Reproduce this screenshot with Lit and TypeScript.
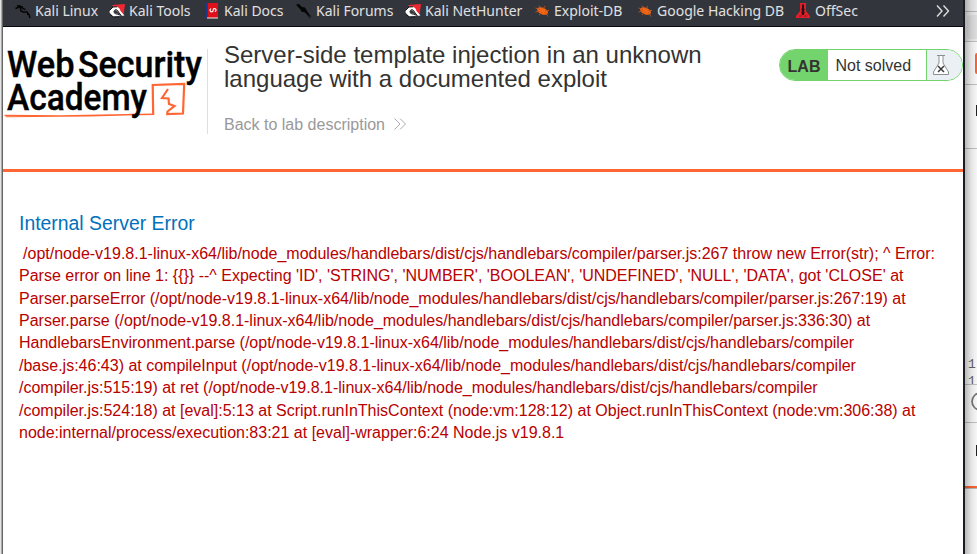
import { LitElement, html, svg, css } from "lit";
import { customElement } from "lit/decorators.js";

const icons: Record<string, unknown> = {
  dragon: svg`<path d="M0.5 5.5 L4 4 L7 4.5 L8.5 6 M2 2.8 L5 3 L8 4.5 M5.5 5 L6 8 L8 9 L12 9 L14 11.5 L15 15 M8.5 6 L10.5 6.5 M13 11 L12 11.5" fill="none" stroke="#050505" stroke-width="1.5"/>`,
  tools: svg`<path d="M3 2 L16 1 L14.5 12 L10 9 Z" fill="#ef2832"/><path d="M0.5 9.5 C1 2.5 10.5 2 11.5 8 L15.5 12.5 L12 13 L9 9 C7 6 4.5 7 5.5 9.5 C7 11 10 10 11 13 L4 13.5 Z" fill="#fff"/><path d="M0.5 7.5 L4 4 L8 3.8 M10.5 12 C8 10.5 5 11.5 5 8.8 C5 6 8.5 6 9.5 9 L12.5 13 M1.5 12 L4.5 14 H10" fill="none" stroke="#171719" stroke-width="1"/>`,
  docs: svg`<rect x="2" y="0" width="12" height="15" fill="#df1019"/><rect x="2" y="0" width="2" height="15" fill="#173c92"/><path d="M3 15h11" stroke="#eee"/><path d="M7 5.5 L5.8 7 L7 8.8 L8.8 8.5 L9.5 5.7 L11 5.5 L12.2 7 L11 8.8" fill="none" stroke="#fff" stroke-width="1.1"/>`,
  forums: svg`<path d="M0 1.5 L3 1 L6 4 L9 4.5 L11 8 L13 11 L16 14 L12 12 L8 9 L6 9 L4 6 L2 4 Z" fill="#050505"/><path d="M11 11 L14 15" stroke="#050505"/>`,
  bug: svg`<ellipse cx="8.5" cy="8" rx="5.8" ry="3.3" transform="rotate(25 8.5 8)" fill="#f36513"/><path d="M1.5 5 L6 6.5 M5 2.5 L7 5 M11 3 L9 6 M1.5 9 L6 8 M5 12 L8 9 M14 13.5 L11 9 M15 7.5 L11 7.5" stroke="#b9571f" stroke-width=".9"/>`,
  offsec: svg`<path d="M5 0h6v8l4 5v2H1v-2l4-5Z" fill="#e31e28"/><path d="M8 1.5 V12 M6.5 6.5h3 M6.5 9.5h3" stroke="#281416" stroke-width="2"/><path d="M4 13h3 M9 13h3" stroke="#801a20"/>`,
};

const bookmarks: [string, string][] = [
  ["dragon", "Kali Linux"],
  ["tools", "Kali Tools"],
  ["docs", "Kali Docs"],
  ["forums", "Kali Forums"],
  ["tools", "Kali NetHunter"],
  ["bug", "Exploit-DB"],
  ["bug", "Google Hacking DB"],
  ["offsec", "OffSec"],
];

const trace = [
  "\u00a0/opt/node-v19.8.1-linux-x64/lib/node_modules/handlebars/dist/cjs/handlebars/compiler/parser.js:267 throw new Error(str); ^ Error:",
  "Parse error on line 1: {{}} --^ Expecting 'ID', 'STRING', 'NUMBER', 'BOOLEAN', 'UNDEFINED', 'NULL', 'DATA', got 'CLOSE' at",
  "Parser.parseError (/opt/node-v19.8.1-linux-x64/lib/node_modules/handlebars/dist/cjs/handlebars/compiler/parser.js:267:19) at",
  "Parser.parse (/opt/node-v19.8.1-linux-x64/lib/node_modules/handlebars/dist/cjs/handlebars/compiler/parser.js:336:30) at",
  "HandlebarsEnvironment.parse (/opt/node-v19.8.1-linux-x64/lib/node_modules/handlebars/dist/cjs/handlebars/compiler",
  "/base.js:46:43) at compileInput (/opt/node-v19.8.1-linux-x64/lib/node_modules/handlebars/dist/cjs/handlebars/compiler",
  "/compiler.js:515:19) at ret (/opt/node-v19.8.1-linux-x64/lib/node_modules/handlebars/dist/cjs/handlebars/compiler",
  "/compiler.js:524:18) at [eval]:5:13 at Script.runInThisContext (node:vm:128:12) at Object.runInThisContext (node:vm:306:38) at",
  "node:internal/process/execution:83:21 at [eval]-wrapper:6:24 Node.js v19.8.1",
];

@customElement("bookmark-bar")
class BookmarkBar extends LitElement {
  static styles = css`
    :host { display: block; height: 27px; box-sizing: border-box; background: #33353d; border-bottom: 1px solid #08080c;
      font: 14px/22px "Noto Sans", sans-serif; color: #e0e0e0; overflow: hidden; }
    .bar { display: grid; grid-template-columns: 94px 95px 92px 109px 129px 103px 158px 141px 1fr; padding-left: 12px; height: 22px; }
    .item { display: flex; align-items: center; gap: 4px; white-space: nowrap; }
    .label { line-height: 20px; }
    .icon { width: 16px; height: 16px; flex: none; }
    .more { width: 14px; height: 14px; align-self: center; }
  `;
  render() {
    return html`<div class="bar">
      ${bookmarks.map(([icon, label]) => html`<div class="item"><svg class="icon" viewBox="0 0 16 16">${icons[icon]}</svg><span class="label">${label}</span></div>`)}
      <svg class="more" viewBox="0 0 14 14"><path d="M1 1.5 L6 7 L1 12.5 M7.5 1.5 L12.5 7 L7.5 12.5" fill="none" stroke="#dedede" stroke-width="1.4"/></svg>
    </div>`;
  }
}

@customElement("lab-header")
class LabHeader extends LitElement {
  static styles = css`
    :host { display: flex; height: 145px; box-sizing: border-box; border-bottom: 3px solid #ff6633; font-family: "Liberation Sans", Arial, sans-serif; color: #333332; }
    .logo { width: 204px; height: 107px; flex: none; overflow: visible; }
    .logo text { font-family: Roboto, sans-serif; font-weight: 500; font-size: 37.5px; fill: #000; stroke: #000; stroke-width: .4px; }
    .title { margin-top: 22px; height: 85px; border-left: 1px solid #dfdfdf; padding-left: 16px; width: 555px; box-sizing: border-box; flex: none; }
    h2 { margin: -6px 0 0; font-size: 24px; line-height: 24px; font-weight: 400; white-space: nowrap; }
    .back { display: flex; align-items: center; gap: 9px; margin-top: 24px; font-size: 16px; line-height: 20px; color: #999; }
    .status { display: flex; box-sizing: border-box; width: 184px; height: 32px; margin: 22px 0 0 17px; border: 1px solid #73d36d; border-radius: 16px; overflow: hidden; font-size: 16px; line-height: 31px; background: #fff; }
    .lab { width: 48px; background: #73d36d; font-weight: 700; text-align: center; line-height: 33px; }
    .state { width: 99px; box-sizing: border-box; padding-left: 7.5px; border-right: 1px solid #73d36d; white-space: nowrap; }
    .flask { flex: 1; background: #eaf0f3; }
    .flask svg { display: block; margin: 4px 0 0 5px; }
  `;
  render() {
    return html`
      <svg class="logo" viewBox="3 27 204 107">
        <text x="7" y="77.4" textLength="67.5" lengthAdjust="spacingAndGlyphs">Web</text>
        <text x="78" y="77.4" textLength="124" lengthAdjust="spacingAndGlyphs">Security</text>
        <path d="M4.5 115.6 L60 116 L153.5 114.2 M6 116.5 L90 115.8 L136 114.5" fill="none" stroke="#ff6633" stroke-width="1.5"/>
        <path d="M153.2 115 L152.7 85 L184.2 84 L183 113.5 L167.2 114 L167.5 111.5 L174.5 106 L169 104 L168.5 98.5 L162 98 L168 89" fill="none" stroke="#ff6633" stroke-width="2.2"/>
        <text x="7" y="110" textLength="140" lengthAdjust="spacingAndGlyphs">Academy</text>
      </svg>
      <div class="title">
        <h2>Server-side template injection in an unknown<br>language with a documented exploit</h2>
        <div class="back"><span>Back to lab description</span><svg width="12" height="14" viewBox="0 0 12 14"><path d="M.5 .5 L6 6 L.5 11.5 M6 .5 L11.5 6 L6 11.5" fill="none" stroke="#aaa"/></svg></div>
      </div>
      <div class="status">
        <div class="lab">LAB</div><div class="state">Not solved</div>
        <div class="flask"><svg width="18" height="22" viewBox="0 0 18 22"><path d="M5 1.5H13 M7 2V9L1.5 18V20.5H16.5V18L11 9V2" fill="#fff" stroke="#8c8f91"/><path d="M6 12 L12 18 M12 12 L6 18" stroke="#3b3b3b" stroke-width="1.5"/></svg></div>
      </div>`;
  }
}

@customElement("window-behind")
class WindowBehind extends LitElement {
  static styles = css`
    :host { display: block; width: 12px; height: 554px; overflow: hidden; }
    svg { display: block; }
    .mono { font: 13px "Liberation Mono", monospace; fill: #666; }
  `;
  render() {
    return html`<svg width="12" height="554" viewBox="0 0 12 554">
      <defs><linearGradient id="shade"><stop stop-color="#000" stop-opacity=".27"/><stop offset=".5" stop-color="#000" stop-opacity=".1"/><stop offset="1" stop-color="#000" stop-opacity=".02"/></linearGradient></defs>
      <rect width="12" height="554" fill="#fcfcfc"/><rect width="12" height="41" fill="#eee"/>
      <path d="M0 11.5H12" stroke="#bcbcbc"/><rect x="2" y="15" width="18" height="24" rx="4" fill="#e2e2e3"/>
      <path d="M0 41.5H12 M0 84.5H12 M0 148.5H12 M0 384.5H12 M0 422.5H12" stroke="#c6c3c5"/>
      <rect x="10" y="53" width="8" height="21" rx="2" fill="#ff6633"/>
      <path d="M11.5 105V116 M11.5 445V456" stroke="#222"/>
      <text class="mono" x="3" y="368">1</text>
      <svg y="370" width="12" height="14"><text class="mono" x="3" y="15">1</text></svg>
      <circle cx="15.5" cy="401.5" r="8.5" fill="none" stroke="#777" stroke-width="1.7"/>
      <rect y="486" width="12" height="2" fill="#ff6633"/><rect y="488" width="12" height="1" fill="#bbb"/>
      <rect width="12" height="554" fill="url(#shade)"/>
    </svg>`;
  }
}

@customElement("app-root")
class AppRoot extends LitElement {
  static styles = css`
    :host { display: flex; width: 977px; height: 554px; overflow: hidden; background: #fff; }
    .edge { width: 3px; box-sizing: border-box; border-left: 1px solid #e4e4e4; border-right: 1px solid #666; background: #aaa; flex: none; }
    .window { width: 960px; flex: none; background: #fff; }
    .frame { width: 2px; background: #1b1b25; flex: none; }
    .content { padding: 38px 16px 0; font-family: "Liberation Sans", Arial, sans-serif; }
    h4 { margin: 0; font-size: 19.4px; line-height: 27px; font-weight: 400; color: #0071bc; }
    .trace { margin: 5.7px 0 0; font-size: 16px; line-height: 22.4px; color: #b80000; white-space: nowrap; }
    .trace div:first-child { margin-left: -0.4px; }
  `;
  render() {
    return html`
      <div class="edge"></div>
      <div class="window">
        <bookmark-bar></bookmark-bar>
        <lab-header></lab-header>
        <div class="content">
          <h4>Internal Server Error</h4>
          <div class="trace">${trace.map((line) => html`<div>${line}</div>`)}</div>
        </div>
      </div>
      <div class="frame"></div>
      <window-behind></window-behind>`;
  }
}
